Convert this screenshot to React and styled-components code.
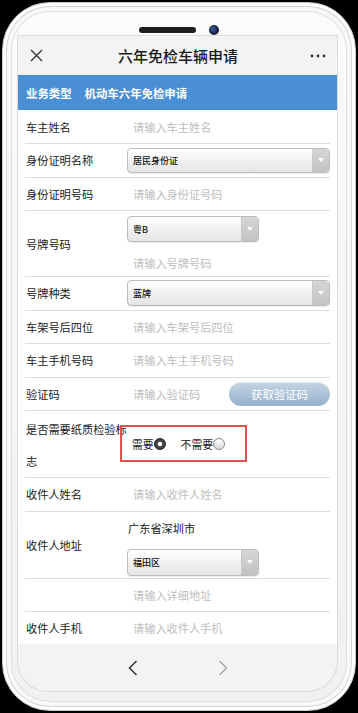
import styled, { createGlobalStyle } from "styled-components";

const GlobalStyle = createGlobalStyle`
  html, body {
    margin: 0;
    padding: 0;
    background: #000;
  }
  body {
    font-family: "Noto Sans CJK SC", "Noto Sans", sans-serif;
    color: #222;
  }
  * { box-sizing: border-box; }
`;

const Stage = styled.div`
  width: 358px;
  height: 713px;
  padding: 2px;
  background: #000;
  overflow: hidden;
`;

const Phone = styled.div`
  width: 354px;
  height: 709px;
  border-radius: 48px;
  border: 1px solid #cbcbcb;
  background: linear-gradient(#fbfbfb, #f0f0f0);
  box-shadow: inset 0 0 0 3px #fff, inset 0 0 0 4px #d6d6d6,
    inset 0 0 0 8px #f8f8f8, inset 0 0 0 9px #e0e0e0;
  padding: 21px 15px 0;
  display: flex;
  flex-direction: column;
`;

const Top = styled.div`
  height: 12px;
  display: flex;
  align-items: center;
  justify-content: center;
  gap: 13px;
`;

const Speaker = styled.div`
  width: 57px;
  height: 6px;
  border-radius: 3px;
  background: #1d1d1d;
`;

const Camera = styled.div`
  width: 10px;
  height: 10px;
  border-radius: 50%;
  background: radial-gradient(circle at 40% 40%, #3d5aa0, #0d1530 70%);
`;

const Screen = styled.div`
  width: 319px;
  height: 655px;
  background: #f3f3f3;
  box-shadow: 0 0 0 1px #dcdcdc;
  border-radius: 0 0 30px 30px;
  display: flex;
  flex-direction: column;
`;

const NavBar = styled.div`
  height: 39px;
  display: grid;
  grid-template-columns: 1fr auto 1fr;
  align-items: center;
  padding: 0 11px 0 12px;
`;

const NavTitle = styled.div`
  font-size: 15px;
  font-weight: 500;
  color: #1a1a1a;
`;

const NavRight = styled.div`
  justify-self: end;
  display: flex;
`;

const TypeBar = styled.div`
  height: 35px;
  background: #4a8fd3;
  display: flex;
  align-items: center;
  gap: 13px;
  padding-left: 8px;
  color: #fff;
  font-size: 11.4px;
  font-weight: 700;
`;

const Form = styled.div`
  height: 534px;
  overflow: hidden;
  background: #fff;
  padding: 0 7px;
`;

const Row = styled.div`
  display: grid;
  grid-template-columns: 102px 1fr;
  align-items: ${(p) => (p.$top ? "start" : "center")};
  height: ${(p) => p.$h || 32.5}px;
  border-bottom: 1px solid #dcdcdc;
  box-sizing: content-box;
`;

const Label = styled.div`
  padding-left: 1px;
  font-size: 11.2px;
  color: #1a1a1a;
  line-height: ${(p) => (p.$wrap ? "32px" : "normal")};
  padding-top: ${(p) => (p.$wrap ? "2px" : "0")};
  white-space: ${(p) => (p.$wrap ? "normal" : "nowrap")};
  align-self: ${(p) => (p.$wrap ? "start" : "center")};
`;

const Field = styled.div`
  display: flex;
  flex-direction: column;
  align-items: flex-start;
`;

const Input = styled.input`
  border: none;
  outline: none;
  background: transparent;
  padding: 0 0 0 6px;
  margin: 0;
  width: 100%;
  font-family: inherit;
  font-size: 11.2px;
  height: ${(p) => p.$h || 20}px;
  margin-top: ${(p) => p.$mt || 0}px;
  color: #222;

  &::placeholder {
    color: #bdbdbd;
  }
`;

const Select = styled.div`
  width: ${(p) => p.$w || "100%"};
  height: ${(p) => p.$h || 26}px;
  margin-top: ${(p) => p.$mt || 0}px;
  border: 1px solid #bdbdbd;
  border-radius: 4px;
  background: linear-gradient(#ffffff, #e4e4e4);
  display: flex;
  align-items: stretch;
  overflow: hidden;
  box-shadow: 0 1px 1px rgba(0, 0, 0, 0.08);
`;

const SelectText = styled.div`
  flex: 1;
  display: flex;
  align-items: center;
  padding-left: 5px;
  font-size: 9px;
  font-weight: 500;
  color: #111;
`;

const SelectArrow = styled.div`
  width: 17px;
  background: linear-gradient(#d6d6d6, #c2c2c2);
  border-left: 1px solid #c9c9c9;
  display: flex;
  align-items: center;
  justify-content: center;

  &::after {
    content: "";
    border-left: 3px solid transparent;
    border-right: 3px solid transparent;
    border-top: 4px solid #fff;
  }
`;

const CodeLine = styled.div`
  width: 100%;
  display: flex;
  align-items: center;
`;

const CodeButton = styled.button`
  flex: none;
  width: 101px;
  height: 24px;
  border: none;
  border-radius: 12px;
  background: linear-gradient(#c4d4e4, #96b1cc);
  box-shadow: inset 0 1px 0 rgba(255, 255, 255, 0.6);
  color: #fff;
  font-family: inherit;
  font-size: 11.4px;
  padding: 0;
`;

const RadioBox = styled.div`
  margin: 14px 0 0 -7px;
  width: 127px;
  height: 37px;
  border: 2.5px solid #e0504c;
  display: flex;
  align-items: center;
  padding-left: 10px;
  gap: 15px;
`;

const RadioOption = styled.label`
  display: flex;
  align-items: center;
  font-size: 10.8px;
  color: #1a1a1a;
`;

const RadioDot = styled.span`
  width: 12px;
  height: 12px;
  border-radius: 50%;
  display: inline-flex;
  border: 1px solid ${(p) => (p.$on ? "#222" : "#8a8a8a")};
  background: ${(p) =>
    p.$on
      ? "radial-gradient(circle, #fff 0 1.8px, #555 2.4px, #222 100%)"
      : "linear-gradient(#ffffff, #d8d8d8)"};
`;

const CityText = styled.div`
  padding: 6px 0 0 1px;
  height: 26px;
  line-height: 20px;
  font-size: 11.2px;
  color: #1a1a1a;
`;

const BottomNav = styled.div`
  height: 47px;
  display: flex;
  align-items: center;
  justify-content: center;
  gap: 80px;
`;

const CloseIcon = () => (
  <svg width="13" height="13" viewBox="0 0 13 13">
    <path d="M1 1L12 12M12 1L1 12" stroke="#333" strokeWidth="1.3" fill="none" />
  </svg>
);

const MoreIcon = () => (
  <svg width="16" height="4" viewBox="0 0 16 4">
    <circle cx="2" cy="2" r="1.4" fill="#333" />
    <circle cx="8" cy="2" r="1.4" fill="#333" />
    <circle cx="14" cy="2" r="1.4" fill="#333" />
  </svg>
);

const Chevron = ({ dir, color }) => (
  <svg width="10" height="16" viewBox="0 0 10 16">
    <path
      d={dir === "left" ? "M8.5 1L1.5 8L8.5 15" : "M1.5 1L8.5 8L1.5 15"}
      stroke={color}
      strokeWidth="1.5"
      fill="none"
    />
  </svg>
);

const Dropdown = ({ value, w, h, mt }) => (
  <Select $w={w} $h={h} $mt={mt}>
    <SelectText>{value}</SelectText>
    <SelectArrow />
  </Select>
);

export default function App() {
  return (
    <>
      <GlobalStyle />
      <Stage>
        <Phone>
          <Top>
            <Speaker />
            <Camera />
          </Top>
          <Screen>
            <NavBar>
              <CloseIcon />
              <NavTitle>六年免检车辆申请</NavTitle>
              <NavRight>
                <MoreIcon />
              </NavRight>
            </NavBar>
            <TypeBar>
              <span>业务类型</span>
              <span>机动车六年免检申请</span>
            </TypeBar>
            <Form>
              <Row $h={33}>
                <Label>车主姓名</Label>
                <Input placeholder="请输入车主姓名" />
              </Row>
              <Row>
                <Label>身份证明名称</Label>
                <Dropdown value="居民身份证" h={25} />
              </Row>
              <Row>
                <Label>身份证明号码</Label>
                <Input placeholder="请输入身份证号码" />
              </Row>
              <Row $h={65} $top>
                <Label>号牌号码</Label>
                <Field>
                  <Dropdown value="粤B" w="132px" mt={5} />
                  <Input placeholder="请输入号牌号码" $h={20} $mt={11} />
                </Field>
              </Row>
              <Row>
                <Label>号牌种类</Label>
                <Dropdown value="蓝牌" />
              </Row>
              <Row>
                <Label>车架号后四位</Label>
                <Input placeholder="请输入车架号后四位" />
              </Row>
              <Row>
                <Label>车主手机号码</Label>
                <Input placeholder="请输入车主手机号码" />
              </Row>
              <Row>
                <Label>验证码</Label>
                <CodeLine>
                  <Input placeholder="请输入验证码" />
                  <CodeButton>获取验证码</CodeButton>
                </CodeLine>
              </Row>
              <Row $h={66} $top>
                <Label $wrap>是否需要纸质检验标志</Label>
                <RadioBox>
                  <RadioOption>
                    需要
                    <RadioDot $on />
                  </RadioOption>
                  <RadioOption>
                    不需要
                    <RadioDot />
                  </RadioOption>
                </RadioBox>
              </Row>
              <Row>
                <Label>收件人姓名</Label>
                <Input placeholder="请输入收件人姓名" />
              </Row>
              <Row $h={66} $top>
                <Label style={{ alignSelf: "center" }}>收件人地址</Label>
                <Field>
                  <CityText>广东省深圳市</CityText>
                  <Dropdown value="福田区" w="132px" h={27} mt={11} />
                </Field>
              </Row>
              <Row>
                <Label />
                <Input placeholder="请输入详细地址" />
              </Row>
              <Row>
                <Label>收件人手机</Label>
                <Input placeholder="请输入收件人手机" />
              </Row>
            </Form>
            <BottomNav>
              <Chevron dir="left" color="#333" />
              <Chevron dir="right" color="#aaa" />
            </BottomNav>
          </Screen>
        </Phone>
      </Stage>
    </>
  );
}
